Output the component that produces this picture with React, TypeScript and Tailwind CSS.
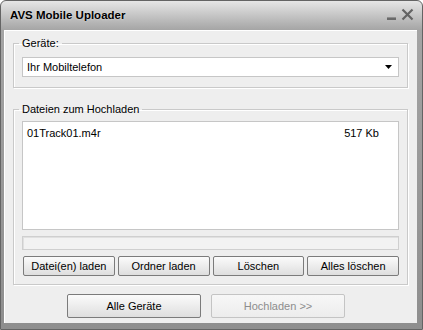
import React from "react";

const font = { fontFamily: '"Liberation Sans", Arial, sans-serif' };

const Btn = ({ label, disabled, className }: any) => {
  return (
    <button
      type="button"
      disabled={disabled}
      className={
        "flex items-center justify-center rounded-[2px] border text-[11px] leading-none " +
        (disabled
          ? "border-[#c4c4c4] bg-gradient-to-b from-[#f7f7f7] to-[#ececec] text-[#8d8d8d] "
          : "border-[#7b7b7b] bg-gradient-to-b from-[#fbfbfb] to-[#dedede] text-black ") +
        className
      }
    >
      {label}
    </button>
  );
};

const Group = ({ title, children, className }: any) => {
  return (
    <fieldset
      className={
        "border border-[#c9c9c9] shadow-[inset_1px_1px_0_#fff,1px_1px_0_#fff] px-[8px] " +
        className
      }
    >
      <legend className="-ml-[3px] px-[3px] text-[11px] leading-[14px] text-black">
        {title}
      </legend>
      {children}
    </fieldset>
  );
};

export default function App() {
  return (
    <div
      className="flex h-[330px] w-[423px] flex-col overflow-hidden rounded-t-[6px] border border-[#646464] bg-gradient-to-b from-[#e6e6e6] via-[#a4a4a4] via-[9%] to-[#8e8e8e]"
      style={font}
    >
      {/* title bar */}
      <div className="flex h-[29px] items-center justify-between pl-[9px] pr-[8px]">
        <span className="text-[11.5px] font-bold text-black [text-shadow:0_0_2px_#e8e8e8]">
          AVS Mobile Uploader
        </span>
        <div className="flex items-center gap-[4px] pb-[2px]">
          <svg width="11" height="12" viewBox="0 0 11 12">
            <rect x="1" y="8" width="9" height="3" fill="#6a6a6a" />
            <rect x="1" y="8" width="9" height="1" fill="#8e8e8e" />
          </svg>
          <svg width="13" height="13" viewBox="0 0 13 13">
            <path d="M1.5 1.5 L11.5 11.5 M11.5 1.5 L1.5 11.5" stroke="#636363" strokeWidth="2.2" />
          </svg>
        </div>
      </div>

      {/* client area */}
      <div className="mb-[6px] ml-[3px] mr-[5px] flex flex-1 flex-col bg-[#eeeeee] px-[9px] shadow-[inset_1px_1px_0_#fff]">
        <Group title="Geräte:" className="mt-[6px] pb-[10px] pt-[7px]">
          <div className="flex h-[20px] items-center justify-between border border-[#c6c6c6] bg-white pl-[4px] pr-[6px] text-[11px] text-black">
            <span>Ihr Mobiltelefon</span>
            <svg width="7" height="4" viewBox="0 0 7 4">
              <path d="M0 0 H7 L3.5 4 Z" fill="#000" />
            </svg>
          </div>
        </Group>

        <Group title="Dateien zum Hochladen" className="mt-[14px] pb-[8px] pt-[5px]">
          <div className="h-[109px] border border-[#c6c6c6] bg-white px-[4px] pr-[19px] pt-[3px] text-[11px] text-black">
            <div className="flex justify-between leading-[16px]">
              <span>01Track01.m4r</span>
              <span>517 Kb</span>
            </div>
          </div>
          <div className="mt-[6px] h-[14px] border border-[#cfcfcf] bg-[#f2f2f2] shadow-[inset_1px_1px_0_#e0e0e0]" />
          <div className="mt-[6px] grid h-[20px] grid-cols-4 gap-[3px] pl-[1px]">
            <Btn label="Datei(en) laden" />
            <Btn label="Ordner laden" />
            <Btn label="Löschen" />
            <Btn label="Alles löschen" />
          </div>
        </Group>

        <div className="ml-[54px] mt-[9px] flex gap-[10px]">
          <Btn label="Alle Geräte" className="h-[24px] w-[134px]" />
          <Btn label="Hochladen >>" disabled className="h-[24px] w-[134px]" />
        </div>
      </div>
    </div>
  );
}
